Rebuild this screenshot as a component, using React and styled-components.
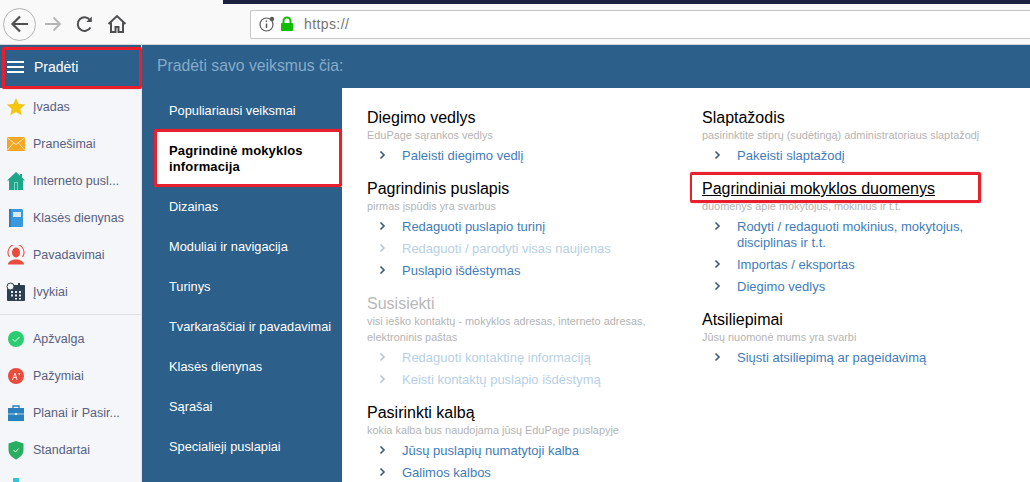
import React from "react";
import styled, { createGlobalStyle } from "styled-components";

const GlobalStyle = createGlobalStyle`
  html, body {
    margin: 0;
    padding: 0;
    background: #ffffff;
    font-family: "Liberation Sans", Arial, sans-serif;
  }
`;

const sideTop = [
  { name: "Įvadas", icon: "star" },
  { name: "Pranešimai", icon: "mail" },
  { name: "Interneto pusl...", icon: "house" },
  { name: "Klasės dienynas", icon: "book" },
  { name: "Pavadavimai", icon: "person" },
  { name: "Įvykiai", icon: "calendar" },
];

const sideBottom = [
  { name: "Apžvalga", icon: "check" },
  { name: "Pažymiai", icon: "grade" },
  { name: "Planai ir Pasir...", icon: "case" },
  { name: "Standartai", icon: "shield" },
  { name: "", icon: "more" },
];

const menu = [
  "Populiariausi veiksmai",
  "Pagrindinė mokyklos informacija",
  "Dizainas",
  "Moduliai ir navigacija",
  "Turinys",
  "Tvarkaraščiai ir pavadavimai",
  "Klasės dienynas",
  "Sąrašai",
  "Specialieji puslapiai",
];

const leftColumn = [
  {
    title: "Diegimo vedlys",
    sub: ["EduPage sąrankos vedlys"],
    links: [{ text: "Paleisti diegimo vedlį" }],
  },
  {
    title: "Pagrindinis puslapis",
    sub: ["pirmas įspūdis yra svarbus"],
    links: [
      { text: "Redaguoti puslapio turinį" },
      { text: "Redaguoti / parodyti visas naujienas", off: true },
      { text: "Puslapio išdėstymas" },
    ],
  },
  {
    title: "Susisiekti",
    off: true,
    sub: ["visi ieško kontaktų - mokyklos adresas, interneto adresas,", "elektroninis paštas"],
    links: [
      { text: "Redaguoti kontaktinę informaciją", off: true },
      { text: "Keisti kontaktų puslapio išdėstymą", off: true },
    ],
  },
  {
    title: "Pasirinkti kalbą",
    sub: ["kokia kalba bus naudojama jūsų EduPage puslapyje"],
    links: [{ text: "Jūsų puslapių numatytoji kalba" }, { text: "Galimos kalbos" }],
  },
];

const rightColumn = [
  {
    title: "Slaptažodis",
    sub: ["pasirinktite stiprų (sudėtingą) administratoriaus slaptažodį"],
    links: [{ text: "Pakeisti slaptažodį" }],
  },
  {
    title: "Pagrindiniai mokyklos duomenys",
    marked: true,
    sub: ["duomenys apie mokytojus, mokinius ir t.t."],
    links: [
      { text: "Rodyti / redaguoti mokinius, mokytojus, disciplinas ir t.t." },
      { text: "Importas / eksportas" },
      { text: "Diegimo vedlys" },
    ],
  },
  {
    title: "Atsiliepimai",
    sub: ["Jūsų nuomonė mums yra svarbi"],
    links: [{ text: "Siųsti atsiliepimą ar pageidavimą" }],
  },
];

function SideIcon({ type }) {
  switch (type) {
    case "star":
      return (
        <svg width="20" height="20" viewBox="0 0 20 20">
          <path d="M10 1l2.7 5.900 6.400.7-4.800 4.300 1.400 6.300L10 15l-5.700 3.200 1.400-6.300L.9 7.600l6.400-.7z" fill="#f5c60f" />
        </svg>
      );
    case "mail":
      return (
        <svg width="20" height="20" viewBox="0 0 20 20">
          <rect x="1" y="3" width="18" height="14" fill="#f5a623" />
          <path d="M1 3.500l9 7 9-7M1 16.500l6.500-7.500M19 16.500L12.500 9" fill="none" stroke="#fde6bd" strokeWidth="1" />
        </svg>
      );
    case "house":
      return (
        <svg width="20" height="20" viewBox="0 0 20 20">
          <path d="M10 1L1 9.500h2V19h14V9.500h2l-3-2.900V3h-2v1.700z" fill="#1fa587" />
          <rect x="8" y="11" width="4" height="8" fill="#7fd1bf" />
          <rect x="9" y="12" width="2" height="7" fill="#1fa587" />
        </svg>
      );
    case "book":
      return (
        <svg width="20" height="20" viewBox="0 0 20 20">
          <rect x="3" y="1" width="14" height="18" rx="1.500" fill="#3a97dc" />
          <rect x="3" y="1" width="2" height="18" fill="#2b7fbe" />
          <rect x="7" y="4" width="8" height="5" fill="#d6ebf9" />
        </svg>
      );
    case "person":
      return (
        <svg width="20" height="20" viewBox="0 0 20 20">
          <path d="M3.500 12A8 8 0 1 1 16.500 12" fill="none" stroke="#ee5a4a" strokeWidth="1.200" />
          <ellipse cx="10" cy="7.500" rx="4" ry="5" fill="#e94c3c" />
          <path d="M2 19.500c0-3.500 4-4 6-5h4c2 1 6 1.500 6 5z" fill="#e94c3c" />
        </svg>
      );
    case "calendar":
      return (
        <svg width="20" height="20" viewBox="0 0 20 20">
          <rect x="1" y="3" width="18" height="16" rx="1" fill="#2c3e50" />
          <rect x="12" y="1" width="2" height="4" fill="#2c3e50" />
          <path d="M5 9h2v2H5zM9 9h2v2H9zM13 9h2v2h-2zM5 12.500h2v2H5zM9 12.500h2v2H9zM13 12.500h2v2h-2zM9 16h2v1.500H9zM13 16h2v1.500h-2z" fill="#e8edf2" />
          <circle cx="4.500" cy="4.500" r="3.500" fill="#f4f6f9" stroke="#2c3e50" strokeWidth="1" />
        </svg>
      );
    case "check":
      return (
        <svg width="20" height="20" viewBox="0 0 20 20">
          <circle cx="10" cy="10" r="8" fill="#2ecc71" />
          <path d="M6.500 10l2.500 2.500 4.500-4.500" fill="none" stroke="#e8fbef" strokeWidth="1" />
        </svg>
      );
    case "grade":
      return (
        <svg width="20" height="20" viewBox="0 0 20 20">
          <circle cx="10" cy="10" r="8" fill="#e94c3c" />
          <path d="M6.500 14l2.500-7 2 7M7.500 11.500h3M12.500 7.500l1.500 1M14 7l-1 2" fill="none" stroke="#fbdcd8" strokeWidth="1" />
        </svg>
      );
    case "case":
      return (
        <svg width="20" height="20" viewBox="0 0 20 20">
          <path d="M7 5V3h6v2" fill="none" stroke="#2a7fbd" strokeWidth="1.300" />
          <rect x="2" y="5" width="16" height="13" fill="#2a7fbd" />
          <path d="M2 11h16" stroke="#d6e8f5" strokeWidth="0.800" />
          <circle cx="10" cy="11" r="1.300" fill="#d6e8f5" />
        </svg>
      );
    case "shield":
      return (
        <svg width="20" height="20" viewBox="0 0 20 20">
          <path d="M10 1l7.500 2.500V10c0 4.500-3.500 7.500-7.500 9.500C6 17.500 2.500 14.500 2.500 10V3.500z" fill="#27ae60" />
          <path d="M7.500 10l2 2 3-3.500" fill="none" stroke="#e8fbef" strokeWidth="1" />
        </svg>
      );
    default:
      return (
        <svg width="20" height="20" viewBox="0 0 20 20">
          <rect x="7" y="1" width="6" height="18" fill="#35c3d6" />
        </svg>
      );
  }
}

function Section({ section }) {
  return (
    <SectionBox>
      <SectionTitle $off={section.off} $marked={section.marked}>
        {section.title}
        {section.marked && <TitleMark />}
      </SectionTitle>
      <SectionSub>
        {section.sub.map((line) => (
          <div key={line}>{line}</div>
        ))}
      </SectionSub>
      <LinkList>
        {section.links.map((link) => (
          <LinkRow key={link.text} $off={link.off}>
            <Chevron width="7" height="10" viewBox="0 0 7 10" $off={link.off}>
              <path d="M1.500 1.500L5 5 1.500 8.500" fill="none" stroke="currentColor" strokeWidth="1.600" />
            </Chevron>
            <span>{link.text}</span>
          </LinkRow>
        ))}
      </LinkList>
    </SectionBox>
  );
}

export default function App() {
  return (
    <Page>
      <GlobalStyle />
      <TopStrip />
      <BrowserBar>
        <BackButton>
          <svg width="24" height="24" viewBox="0 0 24 24">
            <path d="M20 12H5M12 4.500L4.500 12l7.500 7.500" fill="none" stroke="#4f4f52" strokeWidth="2.200" />
          </svg>
        </BackButton>
        <NavIcon width="20" height="20" viewBox="0 0 20 20">
          <path d="M2 10h15M10.500 3.500L17 10l-6.500 6.500" fill="none" stroke="#b4b4b6" strokeWidth="1.800" />
        </NavIcon>
        <NavIcon width="20" height="20" viewBox="0 0 20 20">
          <path d="M15.500 13.500A6.800 6.800 0 1 1 15 6" fill="none" stroke="#4f4f52" strokeWidth="2" />
          <path d="M16.800 2.500v5.500h-5.500z" fill="#4f4f52" />
        </NavIcon>
        <NavIcon width="20" height="20" viewBox="0 0 20 20">
          <path d="M1.500 10L10 2l8.500 8M4 8.500V18h4.500v-5h3v5H16V8.500" fill="none" stroke="#4f4f52" strokeWidth="2" />
        </NavIcon>
        <AddressBar>
          <svg width="16" height="16" viewBox="0 0 16 16">
            <circle cx="7.500" cy="8.500" r="6.500" fill="none" stroke="#5a5a5c" strokeWidth="1.200" />
            <path d="M7.500 7.500v4.500M7.500 4.500v1.500" stroke="#5a5a5c" strokeWidth="1.500" />
            <circle cx="13" cy="3" r="2.200" fill="#5a5a5c" />
          </svg>
          <svg width="14" height="16" viewBox="0 0 14 16">
            <path d="M3.500 7V5a3.500 3.500 0 0 1 7 0v2" fill="none" stroke="#12bc00" strokeWidth="2" />
            <rect x="1" y="7" width="12" height="8" rx="1" fill="#12bc00" />
          </svg>
          <AddressText>https://</AddressText>
        </AddressBar>
      </BrowserBar>

      <Body>
        <Sidebar>
          <StartButton>
            <Burger>
              <i />
              <i />
              <i />
            </Burger>
            Pradėti
            <StartMark />
          </StartButton>
          <SideGroup>
            {sideTop.map((item) => (
              <SideItem key={item.name}>
                <SideIcon type={item.icon} />
                <span>{item.name}</span>
              </SideItem>
            ))}
          </SideGroup>
          <SideDivider />
          <SideGroup>
            {sideBottom.map((item) => (
              <SideItem key={item.icon}>
                <SideIcon type={item.icon} />
                <span>{item.name}</span>
              </SideItem>
            ))}
          </SideGroup>
        </Sidebar>

        <Workspace>
          <Heading>Pradėti savo veiksmus čia:</Heading>
          <WorkRow>
            <MenuColumn>
              {menu.map((name, i) => (
                <MenuItem key={name} $active={i === 1}>
                  {name}
                  {i === 1 && <ActiveMark />}
                </MenuItem>
              ))}
            </MenuColumn>
            <Content>
              <Column>
                {leftColumn.map((s) => (
                  <Section key={s.title} section={s} />
                ))}
              </Column>
              <Column>
                {rightColumn.map((s) => (
                  <Section key={s.title} section={s} />
                ))}
              </Column>
            </Content>
          </WorkRow>
        </Workspace>
      </Body>
    </Page>
  );
}

const Page = styled.div`
  position: relative;
  width: 1030px;
  height: 482px;
  overflow: hidden;
  display: flex;
  flex-direction: column;
`;

const TopStrip = styled.div`
  position: absolute;
  top: 0;
  left: 223px;
  right: 0;
  height: 4px;
  background: #1b2140;
`;

const BrowserBar = styled.div`
  height: 45px;
  box-sizing: border-box;
  flex: none;
  display: flex;
  align-items: center;
  padding: 4px 0 0 3px;
  background: #f9f9fa;
  border-bottom: 1px solid #d6d6d8;
`;

const BackButton = styled.div`
  width: 33px;
  height: 33px;
  box-sizing: border-box;
  border: 1px solid #b4b4b6;
  border-radius: 50%;
  display: flex;
  align-items: center;
  justify-content: center;
  margin-right: 7px;
`;

const NavIcon = styled.svg`
  margin-right: 12px;
  flex: none;
`;

const AddressBar = styled.div`
  margin-left: auto;
  width: 780px;
  height: 29px;
  box-sizing: border-box;
  display: flex;
  align-items: center;
  gap: 5px;
  padding-left: 8px;
  background: #ffffff;
  border: 1px solid #c8c8ca;
  border-right: none;
  border-radius: 2px 0 0 2px;
`;

const AddressText = styled.span`
  margin-left: 5px;
  font-size: 14px;
  color: #737373;
  letter-spacing: 0.4px;
`;

const Body = styled.div`
  flex: 1;
  display: flex;
  min-height: 0;
`;

const Sidebar = styled.div`
  width: 142px;
  flex: none;
  box-sizing: border-box;
  background: #f4f6f9;
  border-right: 1px solid #e2e4e8;
`;

const StartButton = styled.div`
  position: relative;
  height: 43px;
  display: flex;
  align-items: center;
  padding-left: 7px;
  gap: 10px;
  background: #2c5f8a;
  color: #ffffff;
  font-size: 14px;
`;

const Burger = styled.div`
  width: 17px;
  display: flex;
  flex-direction: column;
  gap: 3px;

  i {
    display: block;
    height: 2px;
    background: #ffffff;
  }
`;

const StartMark = styled.div`
  position: absolute;
  inset: 2px -1px -1px 2px;
  border: 3px solid #e8202d;
  border-radius: 2px;
  box-shadow: 0 0 1px #e8202d;
`;

const SideGroup = styled.div`
  display: flex;
  flex-direction: column;
`;

const SideItem = styled.div`
  height: 37px;
  flex: none;
  display: flex;
  align-items: center;
  gap: 7px;
  padding-left: 6px;
  font-size: 12.5px;
  color: #5a5f80;
  white-space: nowrap;

  svg {
    flex: none;
  }
`;

const SideDivider = styled.div`
  height: 1px;
  margin: 4px 0 5px;
  background: #dfe1e5;
`;

const Workspace = styled.div`
  flex: 1;
  display: flex;
  flex-direction: column;
  min-width: 0;
`;

const Heading = styled.div`
  height: 43px;
  flex: none;
  display: flex;
  align-items: center;
  padding: 0 0 1px 15px;
  box-sizing: border-box;
  background: #2c5f8a;
  color: #86abc9;
  font-size: 15.75px;
`;

const WorkRow = styled.div`
  flex: 1;
  display: flex;
  min-height: 0;
`;

const MenuColumn = styled.div`
  width: 200px;
  flex: none;
  padding-top: 3px;
  background: #2c5f8a;
`;

const MenuItem = styled.div`
  position: relative;
  box-sizing: border-box;
  display: flex;
  align-items: center;
  padding: ${(p) => (p.$active ? "0 12px 0 14px" : "0 0 0 27px")};
  margin-left: ${(p) => (p.$active ? "13px" : "0")};
  font-size: ${(p) => (p.$active ? "13px" : "12.8px")};
  line-height: 16px;
  background: ${(p) => (p.$active ? "#ffffff" : "transparent")};
  color: ${(p) => (p.$active ? "#000000" : "#ffffff")};
  font-weight: ${(p) => (p.$active ? 700 : 400)};
  letter-spacing: ${(p) => (p.$active ? "0.15px" : "0")};
  height: ${(p) => (p.$active ? "56px" : "40px")};
`;

const ActiveMark = styled.div`
  position: absolute;
  inset: -2px 0 0 -1px;
  border: 3px solid #e8202d;
  border-radius: 2px;
  box-shadow: 0 0 1px #e8202d;
`;

const Content = styled.div`
  flex: 1;
  display: flex;
  padding: 20px 0 0 25px;
  background: #ffffff;
`;

const Column = styled.div`
  width: 335px;
  flex: none;
`;

const SectionBox = styled.div`
  margin-bottom: 15px;
`;

const SectionTitle = styled.div`
  position: relative;
  font-size: 16px;
  line-height: 19px;
  width: max-content;
  color: ${(p) => (p.$off ? "#b8b8b8" : "#000000")};
  text-decoration: ${(p) => (p.$marked ? "underline" : "none")};
`;

const TitleMark = styled.div`
  position: absolute;
  inset: -7px -46px -5px -12px;
  border: 3px solid #e8202d;
  border-radius: 2px;
  border-left-width: 2px;
  box-shadow: 0 0 1px #e8202d;
`;

const SectionSub = styled.div`
  font-size: 10.9px;
  line-height: 16px;
  margin-bottom: 5px;
  color: #b4b4b4;
`;

const LinkList = styled.div`
  display: flex;
  flex-direction: column;
  gap: 6px;
`;

const LinkRow = styled.div`
  display: flex;
  align-items: flex-start;
  padding-left: 12px;
  width: 300px;
  box-sizing: border-box;
  font-size: 13px;
  line-height: 16px;
  color: ${(p) => (p.$off ? "#b7d0e6" : "#3f7cba")};
`;

const Chevron = styled.svg`
  flex: none;
  margin: 2px 16px 0 0;
  color: ${(p) => (p.$off ? "#b8c4cf" : "#3c5a78")};
`;
